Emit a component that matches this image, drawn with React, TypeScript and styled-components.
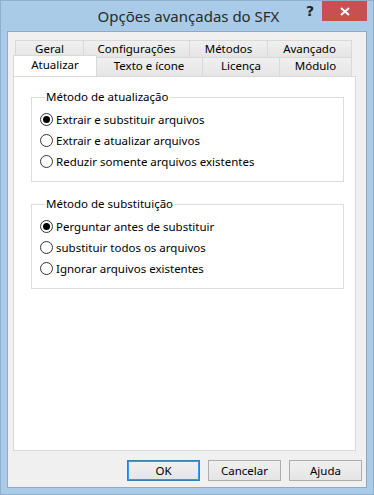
import React from 'react';
import styled, {createGlobalStyle} from 'styled-components';

const GlobalStyle = createGlobalStyle`
    html, body {
        margin: 0;
        padding: 0;
        background: #a9cbe8;
    }
`;

const topTabs = [
    {label: 'Geral', width: 69},
    {label: 'Configurações', width: 107},
    {label: 'Métodos', width: 79},
    {label: 'Avançado', width: 85},
];

const bottomTabs = [
    {label: 'Atualizar', width: 82, selected: true},
    {label: 'Texto e ícone', width: 108},
    {label: 'Licença', width: 78},
    {label: 'Módulo', width: 73},
];

const groups = [
    {
        title: 'Método de atualização',
        options: ['Extrair e substituir arquivos', 'Extrair e atualizar arquivos', 'Reduzir somente arquivos existentes'],
        checked: 0,
    },
    {
        title: 'Método de substituição',
        options: ['Perguntar antes de substituir', 'substituir todos os arquivos', 'Ignorar arquivos existentes'],
        checked: 0,
    },
];

export default function App() {
    return (
        <>
            <GlobalStyle />
            <Window>
                <TitleBar>
                    <Title>Opções avançadas do SFX</Title>
                    <HelpButton>?</HelpButton>
                    <CloseButton>
                        <svg width="10" height="9" viewBox="0 0 10 9">
                            <path d="M1 1 L9 8 M9 1 L1 8" stroke="#fff" strokeWidth="2" />
                        </svg>
                    </CloseButton>
                </TitleBar>
                <Client>
                    <TabRow $indent={2}>
                        {topTabs.map(t => <Tab key={t.label} $width={t.width}>{t.label}</Tab>)}
                    </TabRow>
                    <TabRow $indent={0}>
                        {bottomTabs.map(t =>
                            <Tab key={t.label} $width={t.width} $selected={t.selected} $tall>{t.label}</Tab>)}
                    </TabRow>
                    <Panel>
                        {groups.map(g =>
                            <Group key={g.title}>
                                <Legend>{g.title}</Legend>
                                {g.options.map((o, i) =>
                                    <Option key={o}>
                                        <Radio $checked={i === g.checked} />
                                        {o}
                                    </Option>)}
                            </Group>)}
                    </Panel>
                    <Buttons>
                        <Button $default>OK</Button>
                        <Button>Cancelar</Button>
                        <Button>Ajuda</Button>
                    </Buttons>
                </Client>
            </Window>
        </>
    );
}

const Window = styled.div`
    width: 374px;
    height: 495px;
    box-sizing: border-box;
    border: 1px solid #8db0cf;
    background: #a9cbe8;
    display: flex;
    flex-direction: column;
    font-family: "Noto Sans", "Open Sans", sans-serif;
`;

const TitleBar = styled.div`
    height: 30px;
    display: flex;
    align-items: flex-start;
    position: relative;
`;

const Title = styled.div`
    flex: 1;
    text-align: center;
    font-size: 15px;
    line-height: 30px;
    color: #2a2a2a;
    padding-left: 3px;
`;

const HelpButton = styled.div`
    position: absolute;
    left: 302px;
    top: 1px;
    width: 14px;
    text-align: center;
    font-family: "DejaVu Sans", sans-serif;
    font-weight: bold;
    font-size: 14px;
    line-height: 18px;
    color: #222;
`;

const CloseButton = styled.div`
    position: absolute;
    left: 321px;
    top: 0;
    width: 45px;
    height: 20px;
    background: #c75050;
    display: flex;
    align-items: center;
    justify-content: center;
`;

const Client = styled.div`
    flex: 1;
    margin: 0 6px 6px 6px;
    border: 1px solid #8fa9c2;
    background: #f0f0f0;
    padding: 8px 6px 0 5px;
    display: flex;
    flex-direction: column;
    font-size: 11.5px;
    color: #000;
`;

const TabRow = styled.div<{$indent: number}>`
    display: flex;
    padding-left: ${p => p.$indent}px;
`;

const Tab = styled.div<{$width: number; $selected?: boolean; $tall?: boolean}>`
    box-sizing: border-box;
    width: ${p => p.$width}px;
    height: ${p => p.$tall ? 19 : 17}px;
    margin-left: -1px;
    border: 1px solid #d9d9d9;
    border-bottom: none;
    background: linear-gradient(#f0f0f0, #e5e5e5);
    text-align: center;
    line-height: 16px;
    white-space: nowrap;
    &:first-child {
        margin-left: 0;
    }
    ${p => p.$selected && `
        background: #fff;
        height: 21px;
        margin-top: -2px;
        margin-bottom: -1px;
        width: ${p.$width + 2}px;
        margin-right: -1px;
        position: relative;
        z-index: 1;
        line-height: 17px;
    `}
`;

const Panel = styled.div`
    height: 375px;
    width: 343px;
    box-sizing: border-box;
    border: 1px solid #d9d9d9;
    background: #fff;
    padding: 12px 11px 0 17px;
    display: flex;
    flex-direction: column;
    gap: 14px;
`;

const Group = styled.fieldset`
    margin: 0;
    padding: 4px 0 9px 8px;
    border: 1px solid #dcdcdc;
    display: flex;
    flex-direction: column;
    min-width: 0;
`;

const Legend = styled.legend`
    padding: 0 2px 0 1px;
    margin-left: 5px;
    line-height: 16px;
`;

const Option = styled.label`
    display: flex;
    align-items: center;
    gap: 3px;
    height: 21px;
    white-space: nowrap;
`;

const Radio = styled.span<{$checked?: boolean}>`
    width: 13px;
    height: 13px;
    box-sizing: border-box;
    border-radius: 50%;
    border: 1px solid #333;
    background: #fff;
    display: flex;
    align-items: center;
    justify-content: center;
    flex-shrink: 0;
    &::after {
        content: '';
        width: 7px;
        height: 7px;
        border-radius: 50%;
        background: ${p => p.$checked ? '#000' : 'transparent'};
    }
`;

const Buttons = styled.div`
    display: flex;
    justify-content: flex-end;
    gap: 8px;
    padding: 9px 0 0 0;
    margin-right: -2px;
`;

const Button = styled.div<{$default?: boolean}>`
    box-sizing: border-box;
    width: 73px;
    height: 21px;
    border: 1px solid ${p => p.$default ? '#3c7fb1' : '#adadad'};
    box-shadow: ${p => p.$default ? 'inset 0 0 0 1px #3399ff' : 'none'};
    background: linear-gradient(#f0f0f0, #e5e5e5);
    text-align: center;
    line-height: 19px;
`;
